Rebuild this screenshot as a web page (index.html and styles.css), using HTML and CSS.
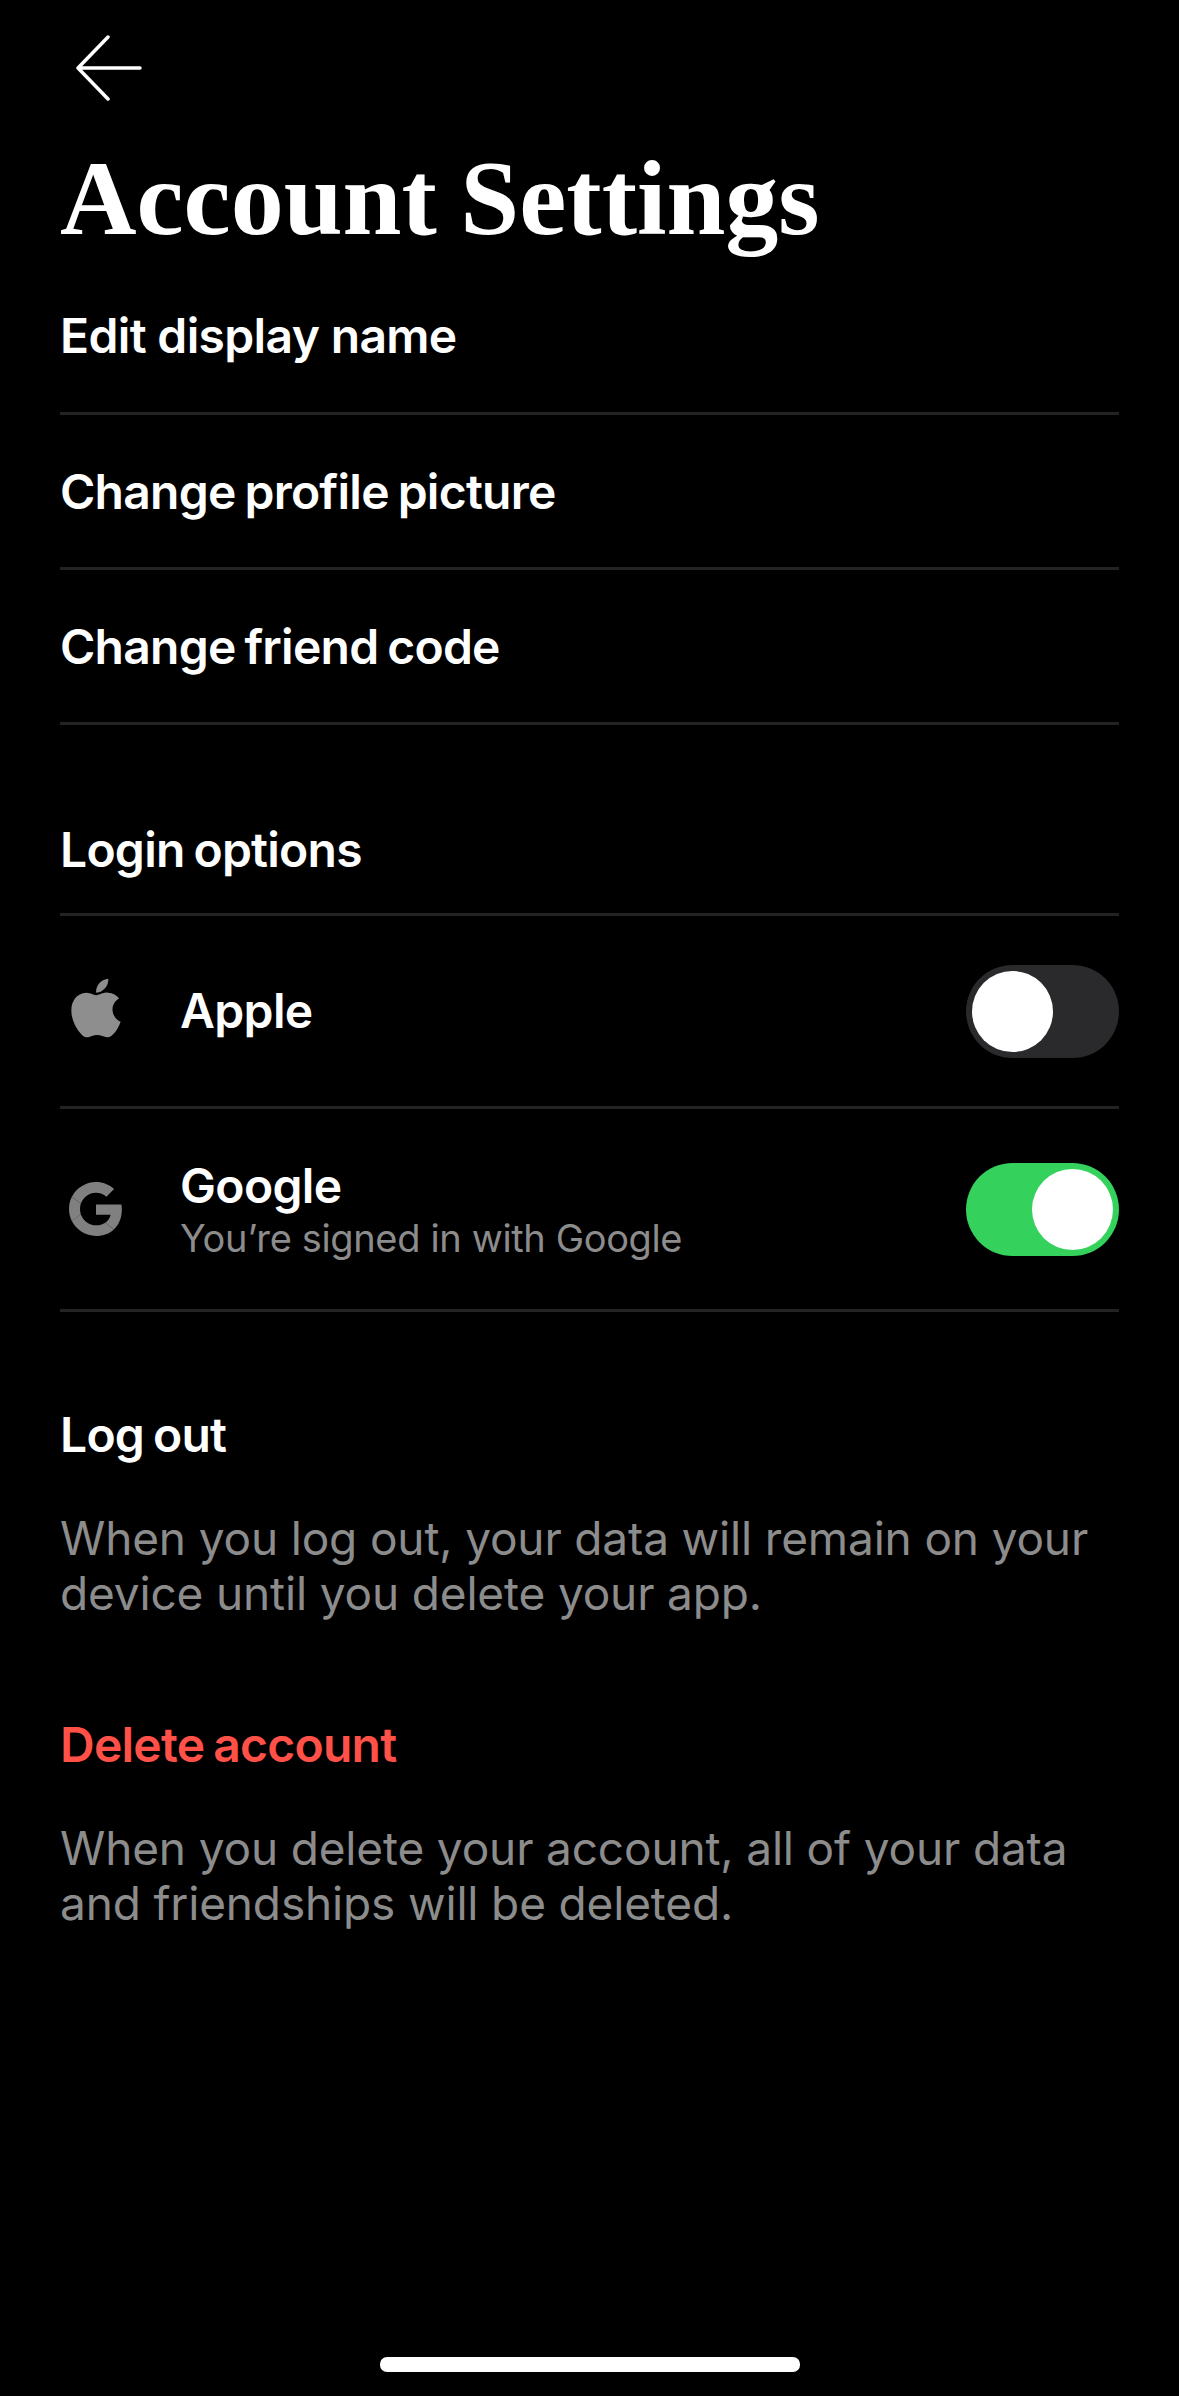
FILE: index.html
```html
<!DOCTYPE html>
<html lang="en">

<head>
  <meta charset="UTF-8">
  <title>Account Settings</title>
  <link rel="stylesheet" href="styles.css">
</head>

<body>
  <div class="screen">

    <!-- Header -->
    <div class="back-btn">
      <svg class="back-icon" viewBox="0 0 66 66" fill="none" stroke="#fff" stroke-width="3.5" stroke-linecap="round" stroke-linejoin="round">
        <path d="M32 2 2 33l30 31M2 33h62"/>
      </svg>
    </div>
    <h1 class="page-title">Account Settings</h1>

    <!-- Profile rows -->
    <div class="row row-first">Edit display name</div>
    <div class="row">Change profile picture</div>
    <div class="row">Change friend code</div>

    <!-- Login options -->
    <div class="section-title">Login options</div>

    <div class="login-row">
      <div class="login-icon">
        <svg class="icon-apple" viewBox="0 0 24 24" fill="#8e8e8e">
          <path d="M17.05 20.28c-.98.95-2.05.8-3.08.35-1.09-.46-2.09-.48-3.24 0-1.44.62-2.2.44-3.06-.35C2.79 15.25 3.51 7.59 9.05 7.31c1.35.07 2.29.74 3.08.8 1.18-.24 2.31-.93 3.57-.84 1.51.12 2.65.72 3.4 1.8-3.12 1.87-2.38 5.98.48 7.13-.57 1.5-1.31 2.99-2.54 4.09zM12.03 7.25c-.15-2.23 1.66-4.07 3.74-4.25.29 2.58-2.34 4.5-3.74 4.25z"/>
        </svg>
      </div>
      <div class="login-text">
        <div class="login-name">Apple</div>
      </div>
      <div class="switch"><span class="knob"></span></div>
    </div>

    <div class="login-row">
      <div class="login-icon">
        <svg class="icon-google" viewBox="0 0 48 48" fill="#808080">
          <path d="M24 9.5c3.54 0 6.71 1.22 9.21 3.6l6.85-6.85C35.9 2.38 30.47 0 24 0 14.62 0 6.51 5.38 2.56 13.22l7.98 6.19C12.43 13.72 17.74 9.5 24 9.5z"/>
          <path d="M46.98 24.55c0-1.57-.15-3.09-.38-4.55H24v9.02h12.94c-.58 2.96-2.26 5.48-4.78 7.18l7.73 6c4.51-4.18 7.09-10.36 7.09-17.65z"/>
          <path d="M10.53 28.59c-.48-1.45-.76-2.99-.76-4.59s.27-3.14.76-4.59l-7.98-6.19C.92 16.46 0 20.12 0 24c0 3.88.92 7.54 2.56 10.78l7.97-6.19z"/>
          <path d="M24 48c6.48 0 11.93-2.13 15.89-5.81l-7.73-6c-2.15 1.45-4.92 2.3-8.16 2.3-6.26 0-11.57-4.22-13.47-9.91l-7.98 6.19C6.51 42.62 14.62 48 24 48z"/>
        </svg>
      </div>
      <div class="login-text">
        <div class="login-name">Google</div>
        <div class="login-sub">You’re signed in with Google</div>
      </div>
      <div class="switch on"><span class="knob"></span></div>
    </div>

    <!-- Account actions -->
    <div class="action action-logout">Log out</div>
    <p class="note">When you log out, your data will remain on your device until you delete your app.</p>

    <div class="action action-delete">Delete account</div>
    <p class="note">When you delete your account, all of your data and friendships will be deleted.</p>

    <div class="home-bar"></div>
  </div>
</body>

</html>
```

FILE: styles.css
```css
* {
  box-sizing: border-box;
}

body {
  margin: 0;
  background: #000;
  color: #fff;
  font-family: Inter, "Liberation Sans", sans-serif;
}

.screen {
  position: relative;
  height: 2396px;
  padding: 0 60px;
  overflow: hidden;
}

.back-btn {
  padding: 35px 0 0 16px;
  height: 102px;
}

.back-icon {
  display: block;
  width: 66px;
  height: 66px;
}

.page-title {
  margin: 41px 0 0;
  font-family: "Liberation Serif", serif;
  font-size: 106px;
  font-weight: 700;
  line-height: 112px;
  word-spacing: -3px;
  height: 115px;
}

.row {
  display: flex;
  align-items: center;
  height: 155px;
  border-bottom: 3px solid #232323;
  font-size: 48px;
  font-weight: 600;
  letter-spacing: -0.75px;
  word-spacing: -2.5px;
}

.row-first {
  height: 157px;
  letter-spacing: -0.65px;
  word-spacing: 0;
}

.section-title {
  display: flex;
  align-items: center;
  height: 191px;
  padding-top: 60px;
  border-bottom: 3px solid #232323;
  font-size: 48px;
  font-weight: 600;
  letter-spacing: -0.75px;
  word-spacing: -2.5px;
}

.login-row {
  display: flex;
  align-items: center;
  border-bottom: 3px solid #232323;
  height: 193px;
}

.login-row + .login-row {
  height: 203px;
}

.login-icon {
  display: flex;
  align-items: center;
  justify-content: center;
  width: 72px;
  margin-right: 48px;
}

.icon-apple {
  width: 78px;
  height: 78px;
  margin-bottom: 7px;
  flex: none;
}

.icon-google {
  width: 54px;
  height: 54px;
  flex: none;
}

.login-text {
  flex: 1;
}

.login-name {
  font-size: 48px;
  font-weight: 600;
  line-height: 54px;
  letter-spacing: -0.65px;
}

.login-sub {
  font-size: 38px;
  line-height: 44px;
  letter-spacing: -0.36px;
  margin-top: 3px;
  color: #8c8c8c;
}

.switch {
  display: flex;
  align-items: center;
  width: 153px;
  height: 93px;
  padding: 0 6px;
  border-radius: 47px;
  background: #2a2a2c;
}

.switch.on {
  justify-content: flex-end;
  background: #34d15c;
}

.knob {
  width: 81px;
  height: 81px;
  border-radius: 50%;
  background: #fff;
}

.action {
  font-size: 48px;
  font-weight: 600;
  line-height: 56px;
  letter-spacing: -0.75px;
  word-spacing: -2.5px;
}

.action-logout {
  margin-top: 95px;
}

.action-delete {
  margin-top: 96px;
  color: #ff5147;
}

.note {
  margin: 48px 0 0;
  font-size: 46px;
  line-height: 55px;
  letter-spacing: -0.16px;
  color: #8c8c8c;
}

.home-bar {
  position: absolute;
  left: 380px;
  top: 2357px;
  width: 420px;
  height: 15px;
  border-radius: 7px;
  background: #fff;
}
```
